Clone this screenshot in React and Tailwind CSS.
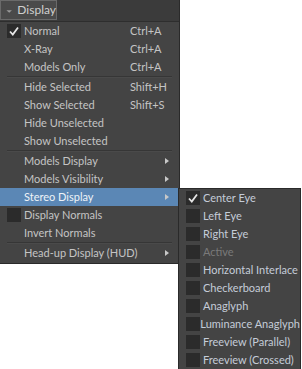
import React from 'react';

const mainItems = [
    { label: 'Normal', shortcut: 'Ctrl+A', check: true, checked: true },
    { label: 'X-Ray', shortcut: 'Ctrl+A' },
    { label: 'Models Only', shortcut: 'Ctrl+A' },
    { sep: true },
    { label: 'Hide Selected', shortcut: 'Shift+H' },
    { label: 'Show Selected', shortcut: 'Shift+S' },
    { label: 'Hide Unselected' },
    { label: 'Show Unselected' },
    { sep: true },
    { label: 'Models Display', sub: true },
    { label: 'Models Visibility', sub: true },
    { label: 'Stereo Display', sub: true, active: true },
    { label: 'Display Normals', check: true },
    { label: 'Invert Normals' },
    { sep: true },
    { label: 'Head-up Display (HUD)', sub: true },
];

const stereoItems = [
    { label: 'Center Eye', checked: true },
    { label: 'Left Eye' },
    { label: 'Right Eye' },
    { label: 'Active', disabled: true },
    { label: 'Horizontal Interlace' },
    { label: 'Checkerboard' },
    { label: 'Anaglyph' },
    { label: 'Luminance Anaglyph' },
    { label: 'Freeview (Parallel)' },
    { label: 'Freeview (Crossed)' },
];

const CheckBox = ({ checked }) => (
    <div className="w-[14px] h-[14px] bg-[#2b2b2b] flex items-center justify-center">
        {checked && (
            <svg width="12" height="12" viewBox="0 0 12 12">
                <polyline points="2,6.5 4.8,9.5 10,2.5" fill="none" stroke="#e6e6e6" strokeWidth="1.8" />
            </svg>
        )}
    </div>
);

const Arrow = () => (
    <svg width="4" height="6" viewBox="0 0 4 6">
        <polygon points="0,0 4,3 0,6" fill="#c8c8c8" />
    </svg>
);

const App = () => {
    return (
        <div className="relative w-[302px] h-[369px] bg-white overflow-hidden text-[11px] text-[#c4c4c4]" style={{ fontFamily: 'Lato, "Noto Sans", sans-serif' }}>
            <div className="w-[180px] bg-[#444444] border-r border-b border-[#2a2a2a]">
                <div className="h-[22px] bg-[#3b3b3b] border-b border-[#2e2e2e] flex">
                    <div className="w-[57px] h-[20px] bg-[#4a4a4a] border border-[#6a6a6a] flex items-center gap-[5px] pl-[5px] text-[12px]">
                        <svg width="7" height="5" viewBox="0 0 7 5" className="mt-[3px]">
                            <polygon points="0.5,1 6.5,1 3.5,4" fill="#9a9a9a" />
                        </svg>
                        <span className="text-[#cfcfcf]">Display</span>
                    </div>
                </div>
                <div className="pb-[1px]">
                    {mainItems.map((item, i) =>
                        item.sep ? (
                            <div key={i} className="mx-[7px] h-[2px] border-t border-[#363636] border-b border-b-[#4a4a4a]" />
                        ) : (
                            <div
                                key={i}
                                className={`h-[18px] flex items-center pl-[7px] pr-[10px] ${item.active ? 'bg-[#5b87b5] text-[#eef3f8]' : ''}`}
                            >
                                <div className="w-[17px]">{item.check && <CheckBox checked={item.checked} />}</div>
                                <span className="flex-1 whitespace-nowrap">{item.label}</span>
                                {item.shortcut && <span className="w-[39px] whitespace-nowrap">{item.shortcut}</span>}
                                {item.sub && <Arrow />}
                            </div>
                        )
                    )}
                </div>
            </div>

            <div className="absolute left-[178px] top-[188px] w-[123px] bg-[#444444] border border-[#2a2a2a]">
                {stereoItems.map((item, i) => (
                    <div key={i} className="h-[18px] flex items-center pl-[7px]">
                        <div className="w-[17px]"><CheckBox checked={item.checked} /></div>
                        <span className={`whitespace-nowrap ${item.disabled ? 'text-[#7a7a7a]' : 'text-[#c4ccd8]'}`}>{item.label}</span>
                    </div>
                ))}
            </div>
        </div>
    );
};

export default App;
